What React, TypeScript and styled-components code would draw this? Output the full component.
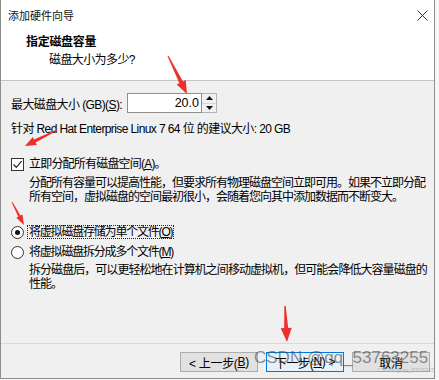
import React from "react";
import styled, { createGlobalStyle } from "styled-components";

const FONT = `"Liberation Sans", "Noto Sans CJK SC", sans-serif`;

const GlobalStyle = createGlobalStyle`
  html, body { margin: 0; padding: 0; background: #f6f6f6; }
  body { font-family: ${FONT}; }
`;

const Window = styled.div`
  position: relative;
  box-sizing: border-box;
  width: 435px;
  height: 379px;
  border: 1px solid #8d8d8d;
  border-top: none;
  background: #f0f0f0;
  display: flex;
  flex-direction: column;
  font-family: ${FONT};
  font-size: 12px;
  color: #000;
  overflow: hidden;
`;

const TitleBar = styled.div`
  height: 30px;
  background: #fff;
  display: flex;
  align-items: center;
  justify-content: space-between;
  padding: 0 6px 0 7px;
`;

const Title = styled.span`
  font-size: 11px;
  color: #111;
`;

const Header = styled.div`
  height: 51px;
  box-sizing: border-box;
  background: #fff;
  border-bottom: 1px solid #c4c4c4;
  padding: 4px 0 0 25px;
`;

const HeaderTitle = styled.div`
  font-weight: bold;
  line-height: 16px;
  letter-spacing: -0.3px;
`;

const HeaderSub = styled.div`
  margin: 2px 0 0 23px;
  line-height: 16px;
  letter-spacing: -0.6px;
`;

const Body = styled.div`
  flex: 1;
  padding: 0 10px;
  display: flex;
  flex-direction: column;
`;

const SizeRow = styled.div`
  margin-top: 12px;
  height: 20px;
  display: flex;
  align-items: center;
`;

const Label = styled.span`
  width: 116px;
  white-space: nowrap;
  letter-spacing: -0.6px;
`;

const NumInput = styled.div`
  width: 75px;
  height: 20px;
  box-sizing: border-box;
  border: 1px solid #8f8f8f;
  background: #fff;
  text-align: right;
  padding-right: 2px;
  line-height: 18px;
  font-size: 12.5px;
`;

const Spin = styled.div`
  width: 15px;
  height: 20px;
  box-sizing: border-box;
  border: 1px solid #b4b4b4;
  border-left: none;
  display: flex;
  flex-direction: column;
  background: #f0f0f0;
`;

const SpinBtn = styled.div<{ $down?: boolean }>`
  flex: 1;
  display: flex;
  align-items: center;
  justify-content: center;
  border-top: ${(p) => (p.$down ? "1px solid #d6d6d6" : "none")};
`;

const Hint = styled.div`
  margin-top: 8px;
  line-height: 16px;
  white-space: nowrap;
  letter-spacing: -0.6px;
`;

const OptionRow = styled.div<{ $mt: number }>`
  margin-top: ${(p) => p.$mt}px;
  height: 16px;
  display: flex;
  align-items: center;
  gap: 2px;
  white-space: nowrap;
`;

const CheckBox = styled.span`
  width: 13px;
  height: 13px;
  box-sizing: border-box;
  border: 1px solid #333;
  background: #fff;
  display: flex;
  align-items: center;
  justify-content: center;
  margin-right: 1px;
`;

const Radio = styled.span<{ $checked?: boolean }>`
  width: 13px;
  height: 13px;
  box-sizing: border-box;
  border: 1px solid #333;
  border-radius: 50%;
  background: #fff;
  display: flex;
  align-items: center;
  justify-content: center;
  margin-right: 1px;
  &::after {
    content: "";
    width: 5px;
    height: 5px;
    border-radius: 50%;
    background: ${(p) => (p.$checked ? "#111" : "transparent")};
  }
`;

const OptionText = styled.span<{ $focus?: boolean; $ls: number }>`
  padding: 0 1px;
  line-height: 12px;
  letter-spacing: ${(p) => p.$ls}px;
  border: 1px dotted ${(p) => (p.$focus ? "#222" : "transparent")};
`;

const Para = styled.div<{ $mt: number; $ls: number }>`
  margin: ${(p) => p.$mt}px 0 0 18px;
  line-height: 14px;
  letter-spacing: ${(p) => p.$ls}px;
  white-space: nowrap;
`;

const U = styled.span`
  text-decoration: underline;
`;

const Footer = styled.div`
  height: 35px;
  box-sizing: border-box;
  border-top: 1px solid #d8d8d8;
  display: flex;
  justify-content: flex-end;
  align-items: flex-start;
  padding: 8px 4px 0 0;
  gap: 8px;
`;

const Button = styled.div<{ $primary?: boolean }>`
  width: 78px;
  height: 20px;
  box-sizing: border-box;
  border: 1px solid ${(p) => (p.$primary ? "#0078d7" : "#adadad")};
  background: ${(p) => (p.$primary ? "#e5f1fb" : "#e1e1e1")};
  display: flex;
  align-items: center;
  justify-content: center;
  white-space: nowrap;
  font-size: 12px;
  letter-spacing: -0.3px;
`;

const Watermark = styled.div`
  position: absolute;
  left: 253px;
  top: 348px;
  font-family: "Liberation Sans", sans-serif;
  font-size: 17px;
  color: rgba(70, 70, 70, 0.6);
  pointer-events: none;
  white-space: nowrap;
`;

const SmallMark = styled.div`
  position: absolute;
  left: 376px;
  top: 367px;
  font-family: "Liberation Sans", sans-serif;
  font-size: 6px;
  color: rgba(120, 120, 120, 0.45);
  white-space: nowrap;
`;

const Overlay = styled.svg`
  position: absolute;
  left: -1px;
  top: 0;
  pointer-events: none;
`;

type Pt = [number, number];

function arrow(tail: Pt, tip: Pt, headLen: number, headHalf: number, tailHalf: number, neckHalf: number) {
  const dx = tip[0] - tail[0];
  const dy = tip[1] - tail[1];
  const L = Math.hypot(dx, dy);
  const ux = dx / L;
  const uy = dy / L;
  const px = -uy;
  const py = ux;
  const bx = tip[0] - ux * headLen;
  const by = tip[1] - uy * headLen;
  const pts: Pt[] = [
    [tail[0] + px * tailHalf, tail[1] + py * tailHalf],
    [bx + px * neckHalf, by + py * neckHalf],
    [bx + px * headHalf, by + py * headHalf],
    tip,
    [bx - px * headHalf, by - py * headHalf],
    [bx - px * neckHalf, by - py * neckHalf],
    [tail[0] - px * tailHalf, tail[1] - py * tailHalf],
  ];
  return pts.map((p) => `${p[0].toFixed(1)},${p[1].toFixed(1)}`).join(" ");
}

const ARROWS = [
  arrow([168, 56], [187, 94], 13, 5, 0.6, 2),
  arrow([57, 130], [25, 146], 11, 4.5, 0.6, 1.6),
  arrow([12, 202], [24, 225], 10, 3.5, 0.5, 1.2),
  arrow([285, 306], [287, 342], 14, 5.5, 0.7, 2),
];

export default function App() {
  return (
    <>
      <GlobalStyle />
      <Window>
        <TitleBar>
          <Title>添加硬件向导</Title>
          <svg width="11" height="11" viewBox="0 0 11 11">
            <path d="M0.5 0.5 L10.5 10.5 M10.5 0.5 L0.5 10.5" stroke="#333" strokeWidth="1" />
          </svg>
        </TitleBar>
        <Header>
          <HeaderTitle>指定磁盘容量</HeaderTitle>
          <HeaderSub>磁盘大小为多少?</HeaderSub>
        </Header>
        <Body>
          <SizeRow>
            <Label>
              最大磁盘大小 (GB)(<U>S</U>):
            </Label>
            <NumInput>20.0</NumInput>
            <Spin>
              <SpinBtn>
                <svg width="7" height="4" viewBox="0 0 7 4">
                  <path d="M0 4 L3.5 0 L7 4 Z" fill="#111" />
                </svg>
              </SpinBtn>
              <SpinBtn $down>
                <svg width="7" height="4" viewBox="0 0 7 4">
                  <path d="M0 0 L3.5 4 L7 0 Z" fill="#111" />
                </svg>
              </SpinBtn>
            </Spin>
          </SizeRow>
          <Hint>针对 Red Hat Enterprise Linux 7 64 位 的建议大小: 20 GB</Hint>
          <OptionRow $mt={19}>
            <CheckBox>
              <svg width="11" height="11" viewBox="0 0 11 11">
                <path d="M1.5 5.5 L4.3 8.4 L9.6 2.2" stroke="#222" strokeWidth="1.2" fill="none" />
              </svg>
            </CheckBox>
            <OptionText $ls={-0.8}>
              立即分配所有磁盘空间(<U>A</U>)。
            </OptionText>
          </OptionRow>
          <Para $mt={4} $ls={-1}>
            分配所有容量可以提高性能，但要求所有物理磁盘空间立即可用。如果不立即分配
            <br />
            所有空间，虚拟磁盘的空间最初很小，会随着您向其中添加数据而不断变大。
          </Para>
          <OptionRow $mt={20}>
            <Radio $checked />
            <OptionText $focus $ls={-1.2}>
              将虚拟磁盘存储为单个文件(<U>O</U>)
            </OptionText>
          </OptionRow>
          <OptionRow $mt={4}>
            <Radio />
            <OptionText $ls={-1.2}>
              将虚拟磁盘拆分成多个文件(<U>M</U>)
            </OptionText>
          </OptionRow>
          <Para $mt={3} $ls={-0.95}>
            拆分磁盘后，可以更轻松地在计算机之间移动虚拟机，但可能会降低大容量磁盘的
            <br />
            性能。
          </Para>
        </Body>
        <Footer>
          <Button>
            &lt; 上一步(<U>B</U>)
          </Button>
          <Button $primary>
            下一步(<U>N</U>) &gt;
          </Button>
          <Button>取消</Button>
        </Footer>
        <Watermark>CSDN @qq_53763255</Watermark>
        <SmallMark>CSDN @qq_53763255</SmallMark>
        <Overlay width="435" height="379" viewBox="0 0 435 379">
          {ARROWS.map((pts, i) => (
            <polygon key={i} points={pts} fill="#ee2f2a" />
          ))}
        </Overlay>
      </Window>
    </>
  );
}
